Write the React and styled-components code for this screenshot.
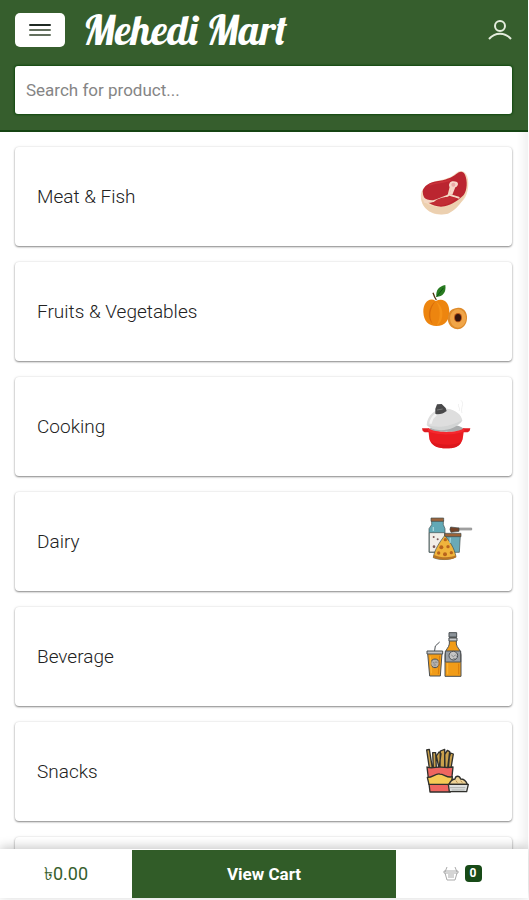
import styled, { createGlobalStyle } from "styled-components";

const GlobalStyle = createGlobalStyle`
  * {
    box-sizing: border-box;
  }

  body {
    margin: 0;
    background: #fff;
    font-family: Roboto, "Liberation Sans", sans-serif;
  }

  button,
  input {
    font-family: inherit;
  }
`;

const Page = styled.div`
  display: flex;
  flex-direction: column;
  height: 100vh;
  padding: 0 1px 2px 0;
  overflow: hidden;
`;

const Header = styled.header`
  display: flex;
  flex-direction: column;
  gap: 19px;
  padding: 13px 16px 16px 15px;
  background: #365e2d;
  border-bottom: 2px solid #154413;
`;

const TopBar = styled.div`
  display: flex;
  align-items: center;
  height: 34px;
`;

const MenuButton = styled.button`
  display: flex;
  align-items: center;
  justify-content: center;
  width: 50px;
  height: 34px;
  padding: 0;
  border: 0;
  border-radius: 5px;
  background: #fff;
  cursor: pointer;
`;

const Brand = styled.a`
  margin-left: 18px;
  color: #fff;
  font-family: Lobster, "Liberation Serif", serif;
  font-size: 41px;
  font-weight: 400;
  line-height: 34px;
  text-decoration: none;
  white-space: nowrap;
`;

const AccountButton = styled.button`
  display: flex;
  margin-left: auto;
  padding: 0;
  border: 0;
  background: none;
  cursor: pointer;
`;

const SearchInput = styled.input`
  width: 100%;
  height: 48px;
  padding: 0 11px;
  border: 0;
  border-radius: 3px;
  background: #fff;
  box-shadow: 0 0 2px 1px #124a10;
  color: #444;
  font-size: 17px;

  &::placeholder {
    color: #858585;
    opacity: 1;
  }
`;

const Main = styled.main`
  flex: 1;
  min-height: 0;
  overflow-y: auto;
  scrollbar-width: none;
  box-shadow: inset -12px 0 10px -8px #eee;
`;

const CategoryList = styled.ul`
  display: flex;
  flex-direction: column;
  gap: 16px;
  margin: 0;
  padding: 15px 16px 15px 15px;
  list-style: none;
`;

const CategoryCard = styled.a`
  display: flex;
  align-items: center;
  justify-content: space-between;
  height: 99px;
  padding: 0 32px 0 22px;
  border-radius: 4px;
  background: #fff;
  box-shadow: 0 1px 2px rgba(0, 0, 0, 0.45), 0 0 3px rgba(0, 0, 0, 0.1);
  color: #222;
  font-size: 19px;
  font-weight: 300;
  text-decoration: none;
`;

const Footer = styled.footer`
  position: relative;
  display: grid;
  grid-template-columns: 1fr 2fr 1fr;
  align-items: center;
  height: 49px;
  background: #fff;
  box-shadow: 0 -2px 10px rgba(0, 0, 0, 0.22);
`;

const Total = styled.span`
  color: #365e2d;
  font-size: 18px;
  line-height: 24px;
  text-align: center;
`;

const CartButton = styled.button`
  height: 48px;
  padding: 0;
  border: 0;
  background: #315c28;
  color: #fff;
  font-size: 17px;
  font-weight: 700;
  cursor: pointer;
`;

const Basket = styled.div`
  display: flex;
  align-items: center;
  justify-content: center;
  gap: 6px;
`;

const Count = styled.span`
  width: 17px;
  border-radius: 4px;
  background: #174a17;
  color: #fff;
  font-size: 12px;
  font-weight: 700;
  line-height: 17px;
  text-align: center;
`;

const Picture = ({ top = 0, children }) => (
  <svg width="70" height="65" viewBox={`0 ${top} 210 195`} aria-hidden="true">
    {children}
  </svg>
);

const MeatIcon = () => (
  <Picture top={12}>
    <path d="M33 101c-4 31 18 60 55 62 34 2 51-21 72-43 16-18 20-61 8-78-9-13-22-11-33 0-15 14-38 16-62 23-19 6-36 17-40 36z" fill="#f4d9bb" />
    <path d="M34 112c8 19 28 29 56 29 36 0 59-30 79-59-2 38-32 70-55 79-42 10-80-13-80-49z" fill="#ecd0b0" />
    <path d="M38 94c3-16 20-26 42-30 27-5 44-10 60-23 9-8 20-9 25 3 8 18 7 46-4 61-14 14-34 29-57 34-30 5-66-11-66-45z" fill="#bb2530" />
    <path d="M38 113c22 20 52 9 78-8l6-24M116 104l30 9M44 125c24 6 44-10 70-18" fill="none" stroke="#f4d8c4" strokeWidth="6" strokeLinecap="round" />
    <path d="M119 69c3-6 13-6 22-3 6 5 2 14-5 16l-9 22h-8l3-19c-5-5-7-10-3-16z" fill="#f7d6c8" />
    <circle cx="130" cy="74" r="6" fill="#eca9a7" />
    <path d="M66 131c14-16 33-22 56-20l17 3c-17 18-46 29-73 17z" fill="#c22d35" />
    <path d="M60 74c22-7 44-7 60-14" fill="none" stroke="#c9323a" strokeWidth="5" strokeLinecap="round" />
  </Picture>
);

const FruitIcon = () => (
  <Picture top={12}>
    <path d="M77 78c-18-13-38 4-37 33 1 28 16 42 39 42 27 0 39-18 39-42 0-27-15-45-41-33z" fill="#ed850f" />
    <path d="M77 78c-22 16-28 50-9 69-12-23-8-47 9-69z" fill="#d96d0b" />
    <path d="M78 80c14 16 15 49 2 71 23-11 24-57-2-71z" fill="#f59218" />
    <path d="M79 75c-4-6-7-13-10-22" fill="none" stroke="#51340f" strokeWidth="4" />
    <path d="M79 66c-2-22 8-32 27-36 3 23-7 34-27 36z" fill="#287a20" />
    <path d="m80 65 20-26" stroke="#0b5511" strokeWidth="3" />
    <path d="M141 99c23-4 34 18 29 39-5 20-21 28-36 23-16-5-24-22-19-40 3-14 12-21 26-22z" fill="#de8a2a" />
    <ellipse cx="144" cy="130" rx="24" ry="28" fill="#f0a548" />
    <ellipse cx="144" cy="128" rx="12" ry="14" fill="#b65419" />
    <ellipse cx="144" cy="128" rx="9" ry="11" fill="#35160f" />
  </Picture>
);

const PotIcon = () => (
  <Picture top={12}>
    <path d="M153 31c12 12-3 21 3 38m-10-27c-4 8 7 13 1 21" fill="none" stroke="#e8e8e8" strokeWidth="2" />
    <path d="M58 117c16-19 84-19 105 0v8H58z" fill="#a9acad" />
    <path d="M50 105c2-31 29-53 62-49 25 3 43 18 45 36-11 22-94 36-107 13z" fill="#dedede" />
    <path d="M61 101c5-23 21-36 46-39" fill="none" stroke="#f3f3f3" strokeWidth="7" />
    <path d="M52 103c29 16 76 4 104-13-14 31-84 44-104 13z" fill="#d2d4d4" />
    <path d="m76 56 5-13 14-1 12 12 3 9c-9 8-28 13-34 8z" fill="#49494a" />
    <path d="m81 60 17-3" stroke="#777" strokeWidth="3" />
    <path d="M36 115h22l4 12H44q-8-3-8-12zM181 115h-22l-4 12h18q8-3 8-12z" fill="#e01d22" />
    <path d="M55 119c22 11 85 12 107 0l-4 29c-7 22-24 27-50 27s-43-7-50-27z" fill="#ea1c21" />
    <path d="M54 115c20 14 87 15 109 0v8c-21 13-88 14-109 0z" fill="#f5282e" />
    <path d="M62 154c18 12 73 14 92 1-7 17-23 20-46 20s-38-6-46-21z" fill="#dc161c" />
  </Picture>
);

const DairyIcon = () => (
  <Picture top={6}>
    <g stroke="#3e4b4c" strokeWidth="2" strokeLinejoin="round">
      <path d="M65 40h35v13l5 12v71H57V65l8-12z" fill="#62a9b6" />
      <path d="M58 77h46v58H58z" fill="#f2eee8" />
      <path d="M63 33h38v10H63z" fill="#9c653d" />
      <path d="m107 86h44l-3 50h-37z" fill="#6aa9b6" />
      <path d="M104 79h49v10h-49z" fill="#9c6338" />
      <path d="M143 63h42v6h-42z" fill="#aaa" stroke="#888" />
      <path d="M122 60l25 3v10l-24 3q-6-9-1-16z" fill="#744328" />
      <path d="M104 86c-13 16-32 44-34 66 19 8 51 8 68-3-5-26-19-47-34-63z" fill="#f0b43c" />
    </g>
    <path d="M72 144c19 8 47 10 65 1l2 6c-21 11-52 9-70 0z" fill="#b97625" />
    <g fill="#b8641d">
      <circle cx="106" cy="98" r="5" />
      <circle cx="94" cy="121" r="6" />
      <circle cx="114" cy="119" r="5" />
      <circle cx="86" cy="138" r="5" />
      <circle cx="105" cy="142" r="6" />
      <circle cx="124" cy="137" r="5" />
    </g>
    <g fill="#795856">
      <circle cx="71" cy="90" r="3" />
      <circle cx="83" cy="97" r="3" />
      <circle cx="72" cy="119" r="4" />
    </g>
    <path d="M70 60v12m51 20-1 16" stroke="#a5d4da" strokeWidth="4" />
  </Picture>
);

const BeverageIcon = () => (
  <Picture top={3}>
    <g stroke="#4b5054" strokeWidth="3" strokeLinejoin="round">
      <path d="m73 89 3-20 13-12" fill="none" />
      <path d="M53 91h43l-5 68H59z" fill="#f19c18" />
      <path d="M51 84h47v9H51z" fill="#c3c4c5" />
      <circle cx="75" cy="121" r="13" fill="#b5b1ab" />
      <path d="M118 43h21v20c1 11 14 17 14 32v65h-48V95c0-15 12-21 13-32z" fill="#f19c18" />
      <path d="M117 29h23v13h-23z" fill="#8c9399" />
      <path d="M117 45h24v9h-24z" fill="#c8c9ca" />
      <path d="M106 84h46v33h-46z" fill="#999fa5" />
      <circle cx="130" cy="98" r="13" fill="#c5c5c4" />
    </g>
    <path d="m68 117 5 4 5-5 4 4m-11 6h7m46-30 6 5 6-5 5 5m-12 6h8" fill="none" stroke="#6c7176" strokeWidth="2" />
    <path d="M61 100l3 51m49-31v34" stroke="#ffb733" strokeWidth="3" />
    <path d="M89 98l-4 55m61-31v32" stroke="#d97d0c" strokeWidth="3" />
  </Picture>
);

const SnackIcon = () => (
  <Picture top={3}>
    <g stroke="#30302c" strokeWidth="4" strokeLinejoin="round">
      <path d="m50 36 8-2 9 56H58zM68 44h9l2 46h-9zM79 54l8-12 6 5-6 43zM91 39l13-5 1 56H90zM104 50l8-13 7 4-6 49h-9zM118 57l4-12 8 3-7 42h-8z" fill="#c9a04c" />
      <path d="M51 87c13 6 26 0 38 0 12 1 26 3 40 0l-8 75H60z" fill="#ef6660" />
      <path d="M52 118c16 1 23-12 37-10 14 0 22 13 38 8l-3 23H57z" fill="#f6ca55" />
      <path d="m117 139c5-13 10-15 18-16 2-11 13-11 17 0 11 0 17 8 20 16z" fill="#eed397" />
      <path d="M115 139h60l-5 22h-52z" fill="#dfe1e0" />
    </g>
    <path d="M120 149h46m-41 7h39" stroke="#8e928e" strokeWidth="2" />
    <path d="M138 128l4 6m10-6 5 6" stroke="#b58c4e" strokeWidth="3" />
  </Picture>
);

const categories = [
  { name: "Meat & Fish", Icon: MeatIcon },
  { name: "Fruits & Vegetables", Icon: FruitIcon },
  { name: "Cooking", Icon: PotIcon },
  { name: "Dairy", Icon: DairyIcon },
  { name: "Beverage", Icon: BeverageIcon },
  { name: "Snacks", Icon: SnackIcon },
];

const App = () => {
  return (
    <Page>
      <GlobalStyle />
      <Header>
        <TopBar>
          <MenuButton type="button" aria-label="Menu">
            <svg width="24" height="16" viewBox="0 0 24 16" fill="none" strokeWidth="2" strokeLinecap="round">
              <path d="M2 3h20" stroke="#202a24" />
              <path d="M2 8h20M2 13h20" stroke="#63705e" />
            </svg>
          </MenuButton>
          <Brand href="#">Mehedi Mart</Brand>
          <AccountButton type="button" aria-label="Account">
            <svg width="24" height="22" viewBox="0 0 24 22" fill="none" stroke="#e4eddd" strokeWidth="2">
              <circle cx="12" cy="7" r="5" />
              <path d="M1 20c6-7 16-7 22 0" />
            </svg>
          </AccountButton>
        </TopBar>
        <SearchInput type="search" aria-label="Search" placeholder="Search for product..." />
      </Header>

      <Main>
        <CategoryList>
          {categories.map(({ name, Icon }) => (
            <li key={name}>
              <CategoryCard href="#">
                {name}
                <Icon />
              </CategoryCard>
            </li>
          ))}
          <li>
            <CategoryCard as="div" />
          </li>
        </CategoryList>
      </Main>

      <Footer>
        <Total>৳0.00</Total>
        <CartButton type="button">View Cart</CartButton>
        <Basket>
          <svg width="16" height="16" viewBox="0 0 16 16" fill="none" stroke="#aaa">
            <path d="M4 1 2 6m10-5 2 5M1 5h14v2H1zM2 7l2 7h8l2-7M6 8v4m2-4v4m2-4v4" />
          </svg>
          <Count>0</Count>
        </Basket>
      </Footer>
    </Page>
  );
};

export default App;
